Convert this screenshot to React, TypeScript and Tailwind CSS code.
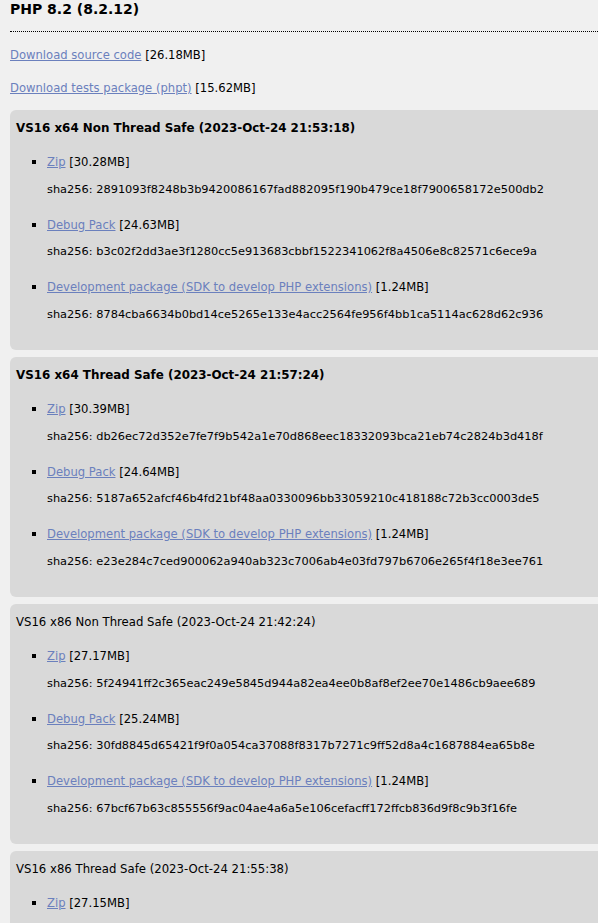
type Item = { label: string; size: string; sha?: string };
type Build = { title: string; bold: boolean; items: Item[] };

const builds: Build[] = [
  {
    title: "VS16 x64 Non Thread Safe (2023-Oct-24 21:53:18)",
    bold: true,
    items: [
      { label: "Zip", size: "[30.28MB]", sha: "2891093f8248b3b9420086167fad882095f190b479ce18f7900658172e500db2" },
      { label: "Debug Pack", size: "[24.63MB]", sha: "b3c02f2dd3ae3f1280cc5e913683cbbf1522341062f8a4506e8c82571c6ece9a" },
      {
        label: "Development package (SDK to develop PHP extensions)",
        size: "[1.24MB]",
        sha: "8784cba6634b0bd14ce5265e133e4acc2564fe956f4bb1ca5114ac628d62c936",
      },
    ],
  },
  {
    title: "VS16 x64 Thread Safe (2023-Oct-24 21:57:24)",
    bold: true,
    items: [
      { label: "Zip", size: "[30.39MB]", sha: "db26ec72d352e7fe7f9b542a1e70d868eec18332093bca21eb74c2824b3d418f" },
      { label: "Debug Pack", size: "[24.64MB]", sha: "5187a652afcf46b4fd21bf48aa0330096bb33059210c418188c72b3cc0003de5" },
      {
        label: "Development package (SDK to develop PHP extensions)",
        size: "[1.24MB]",
        sha: "e23e284c7ced900062a940ab323c7006ab4e03fd797b6706e265f4f18e3ee761",
      },
    ],
  },
  {
    title: "VS16 x86 Non Thread Safe (2023-Oct-24 21:42:24)",
    bold: false,
    items: [
      { label: "Zip", size: "[27.17MB]", sha: "5f24941ff2c365eac249e5845d944a82ea4ee0b8af8ef2ee70e1486cb9aee689" },
      { label: "Debug Pack", size: "[25.24MB]", sha: "30fd8845d65421f9f0a054ca37088f8317b7271c9ff52d8a4c1687884ea65b8e" },
      {
        label: "Development package (SDK to develop PHP extensions)",
        size: "[1.24MB]",
        sha: "67bcf67b63c855556f9ac04ae4a6a5e106cefacff172ffcb836d9f8c9b3f16fe",
      },
    ],
  },
  {
    title: "VS16 x86 Thread Safe (2023-Oct-24 21:55:38)",
    bold: false,
    items: [{ label: "Zip", size: "[27.15MB]" }],
  },
];

function Link({ children }: { children: string }) {
  return (
    <a href="#" className="text-[#6b80bd] underline">
      {children}
    </a>
  );
}

function BuildBox({ build }: { build: Build }) {
  return (
    <div className="-mr-[30px] mt-[7px] rounded-[6px] bg-[#d9d9d9] pt-[10px] pr-[6px] pb-[28.5px] pl-[6px] first:mt-0">
      <h3 className={build.bold ? "text-[11.9px] font-bold" : "text-[11.7px] font-normal"}>{build.title}</h3>
      <ul className="mt-[18px] flex flex-col gap-[20px]">
        {build.items.map((it) => (
          <li key={it.label} className="flex">
            <div className="w-[31px] shrink-0">
              <span className="mt-[6px] ml-[16px] block h-[4px] w-[4px] bg-black" />
            </div>
            <div className="flex flex-col">
              <div className="whitespace-nowrap">
                <Link>{it.label}</Link> {it.size}
              </div>
              {it.sha && <div className="mt-[10.5px] whitespace-nowrap text-[11.37px]">sha256: {it.sha}</div>}
            </div>
          </li>
        ))}
      </ul>
    </div>
  );
}

export default function App() {
  return (
    <div
      className="h-[923px] overflow-hidden bg-[#f0f0f0] pl-[10px] text-[11.6px] leading-[16px] text-black"
      style={{ fontFamily: '"DejaVu Sans", Verdana, sans-serif' }}
    >
      <div className="-mr-[30px] border-b border-dotted border-black pb-[13px]">
        <h2 className="text-[14px] leading-[18px] font-bold">PHP 8.2 (8.2.12)</h2>
      </div>
      <p className="mt-[15px]">
        <Link>Download source code</Link> [26.18MB]
      </p>
      <p className="mt-[17px]">
        <Link>Download tests package (phpt)</Link> [15.62MB]
      </p>
      <div className="mt-[14px] flex flex-col">
        {builds.map((b) => (
          <BuildBox key={b.title} build={b} />
        ))}
      </div>
    </div>
  );
}
